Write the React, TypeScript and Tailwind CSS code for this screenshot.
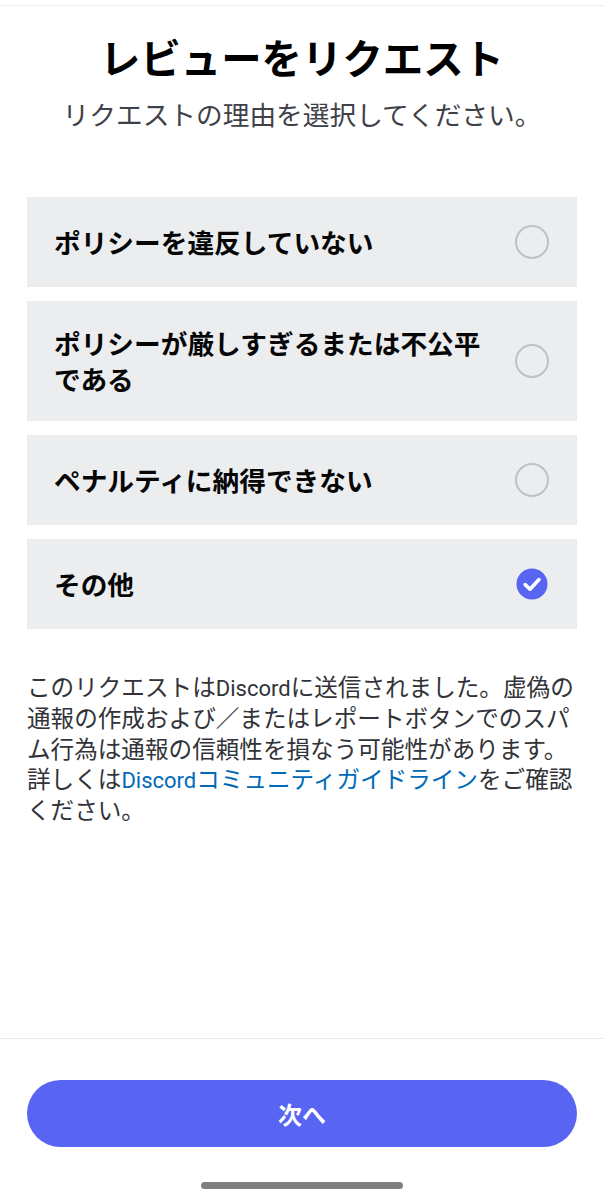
const options = [
  { label: "ポリシーを違反していない", h: "h-[90px]" },
  { label: "ポリシーが厳しすぎるまたは不公平である", h: "h-[120px]" },
  { label: "ペナルティに納得できない", h: "h-[90px]" },
  { label: "その他", h: "h-[90px]", checked: true },
];

export default function App() {
  return (
    <div className="relative flex h-[1200px] w-[604px] flex-col overflow-hidden bg-white font-['Roboto','Noto_Sans_CJK_JP',sans-serif]">
      <div className="mt-[5px] h-px bg-[#eeeeef]" />
      <div className="flex flex-col items-center pt-[31px]">
        <h1 className="text-[40.4px] leading-[48px] font-bold text-black">レビューをリクエスト</h1>
        <p className="mt-[12px] text-[26.7px] leading-[38px] text-[#3f4148]">リクエストの理由を選択してください。</p>
      </div>
      <div className="mx-[27px] mt-[62px] flex flex-col gap-[14px]">
        {options.map((o) => (
          <div key={o.label} className={`flex items-center justify-between bg-[#ebedef] pr-[28px] pl-[27px] ${o.h}`}>
            <span className="w-[440px] pt-[3px] text-[26.7px] leading-[36px] font-bold text-[#060607]">{o.label}</span>
            {o.checked ? (
              <svg width="34" height="34" viewBox="0 0 34 34" className="shrink-0">
                <circle cx="17" cy="17" r="15.5" fill="#5865f2" />
                <path d="M10.2 17.6l4.8 4.6 9-9.6" fill="none" stroke="#fff" strokeWidth="3.6" strokeLinecap="round" strokeLinejoin="round" />
              </svg>
            ) : (
              <div className="h-[34px] w-[34px] shrink-0 rounded-full border-2 border-[#bfc1c5]" />
            )}
          </div>
        ))}
      </div>
      <p className="mr-[28px] ml-[27px] mt-[44px] text-[23.6px] leading-[30.3px] text-[#313338]">
        このリクエストは<span className="text-[22px]">Discord</span>に送信されました。虚偽の通報の作成および／またはレポートボタンでのスパム行為は通報の信頼性を損なう可能性があります。詳しくは
        <span className="text-[#006ab8]"><span className="text-[22px]">Discord</span>コミュニティガイドライン</span>
        をご確認ください。
      </p>
      <div className="mt-auto h-[162px] border-t border-[#e8e9ea] px-[27px] pt-[41px]">
        <button className="flex h-[67px] w-full items-center justify-center rounded-full bg-[#5865f2] pt-[4px] text-[24px] font-bold text-white">次へ</button>
      </div>
      <div className="absolute bottom-[11px] left-[201px] h-[7px] w-[202px] rounded-full bg-[#808080]" />
    </div>
  );
}
